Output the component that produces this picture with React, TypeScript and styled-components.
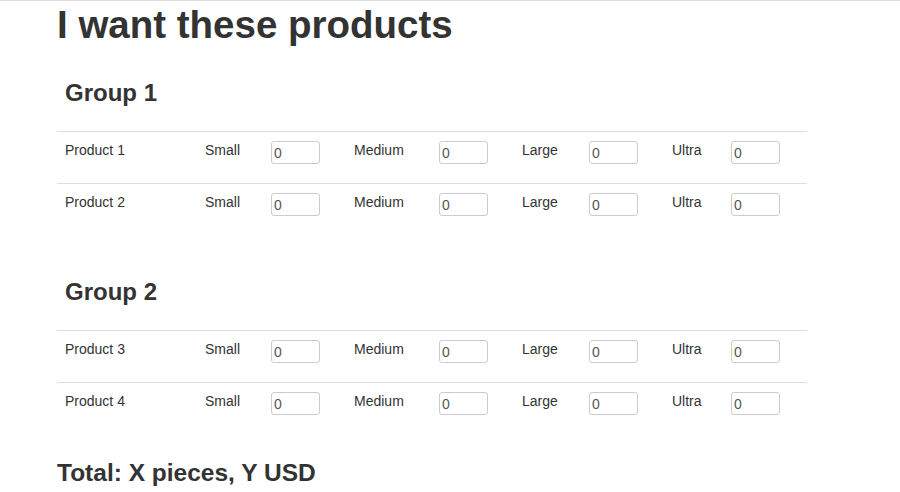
import React from "react";
import styled, { createGlobalStyle } from "styled-components";

const GlobalStyle = createGlobalStyle`
  html, body { margin: 0; padding: 0; background: #fff; }
  body {
    font-family: "Liberation Sans", Arial, Helvetica, sans-serif;
    font-size: 14px;
    line-height: 20px;
    color: #333;
  }
  * { box-sizing: border-box; }
`;

const TopRule = styled.div`
  border-top: 1px solid #ddd;
`;

const Page = styled.main`
  width: 750px;
  margin-left: 57px;
`;

const Title = styled.h1`
  font-size: 38.5px;
  font-weight: bold;
  line-height: 40px;
  margin: 4px 0 0;
  color: #333;
`;

const Section = styled.section<{ $first?: boolean }>`
  margin-top: ${(p) => (p.$first ? "35px" : "44px")};
`;

const GroupTitle = styled.h2`
  font-size: 24px;
  font-weight: bold;
  line-height: 26px;
  margin: 0 0 25px;
  padding-left: 8px;
  color: #333;
`;

const Table = styled.div`
  width: 750px;
`;

const Row = styled.div`
  display: grid;
  grid-template-columns: 140px 66px 83px 85px 83px 67px 83px 59px 84px;
  height: 52px;
  border-top: 1px solid #ddd;
`;

const Cell = styled.div`
  padding: 8px;
`;

const InputCell = styled.div`
  padding: 9px 8px 8px;
`;

const QtyInput = styled.input`
  display: block;
  width: 49px;
  height: 23px;
  border: 1px solid #ccc;
  border-radius: 3px;
  padding: 0 2px;
  font-family: "Liberation Sans", Arial, sans-serif;
  font-size: 14px;
  color: #555;
  background: #fff;
  outline: none;
`;

const Total = styled.h3`
  font-size: 24.5px;
  font-weight: bold;
  line-height: 26px;
  margin: 26px 0 0;
  color: #333;
`;

const sizes = ["Small", "Medium", "Large", "Ultra"];

const groups = [
  { name: "Group 1", products: ["Product 1", "Product 2"] },
  { name: "Group 2", products: ["Product 3", "Product 4"] },
];

export default function App() {
  return (
    <>
      <GlobalStyle />
      <TopRule />
      <Page>
        <Title>I want these products</Title>
        {groups.map((g, gi) => (
          <Section key={g.name} $first={gi === 0}>
            <GroupTitle>{g.name}</GroupTitle>
            <Table>
              {g.products.map((p) => (
                <Row key={p}>
                  <Cell>{p}</Cell>
                  {sizes.map((s) => (
                    <React.Fragment key={s}>
                      <Cell>{s}</Cell>
                      <InputCell>
                        <QtyInput type="text" defaultValue="0" />
                      </InputCell>
                    </React.Fragment>
                  ))}
                </Row>
              ))}
            </Table>
          </Section>
        ))}
        <Total>Total: X pieces, Y USD</Total>
      </Page>
    </>
  );
}
